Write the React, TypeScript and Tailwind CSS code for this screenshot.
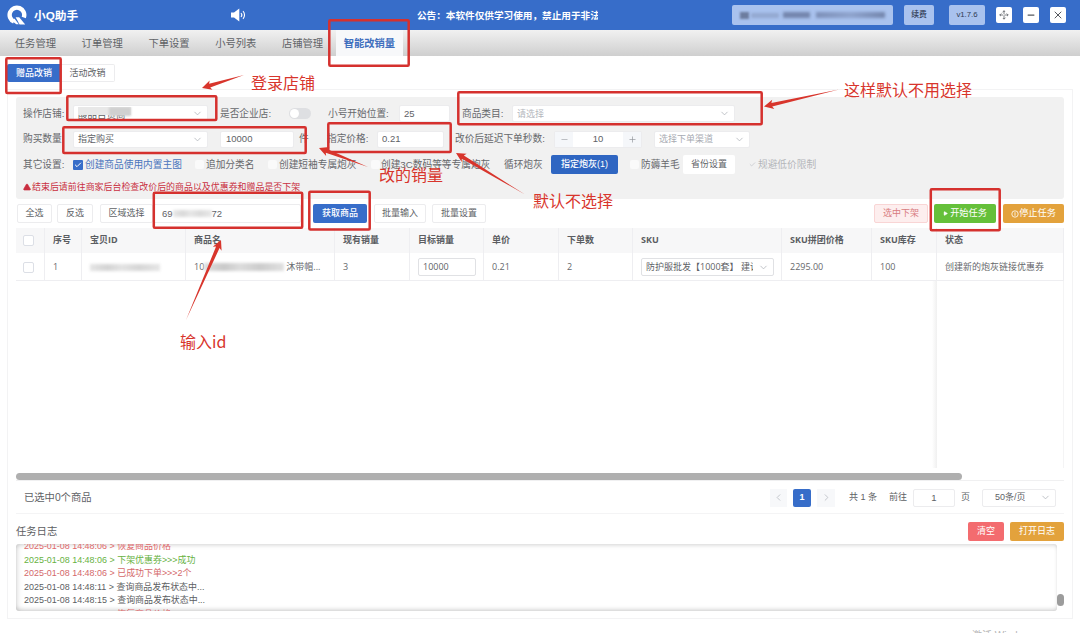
import { AlertTriangle, Check, ChevronDown, ChevronLeft, ChevronRight, Minus, Move, Play, Plus, X } from "lucide-react";
import clsx from "clsx";
import type { ReactNode } from "react";

const NAV = ["任务管理", "订单管理", "下单设置", "小号列表", "店铺管理", "智能改销量"];

const COLUMNS = [
  { title: "序号", width: "w-[37px]" },
  { title: "宝贝ID", width: "w-[104px]" },
  { title: "商品名", width: "w-[149px]" },
  { title: "现有销量", width: "w-[75px]" },
  { title: "目标销量", width: "w-[74px]" },
  { title: "单价", width: "w-[75px]" },
  { title: "下单数", width: "w-[74px]" },
  { title: "SKU", width: "w-[149px]" },
  { title: "SKU拼团价格", width: "w-[90px]" },
  { title: "SKU库存", width: "w-[65px]" },
  { title: "状态", width: "w-[127px]" },
];

const LOGS = [
  { time: "2025-01-08 14:48:06", text: "恢复商品价格", color: "text-[#e0686a]" },
  { time: "2025-01-08 14:48:06", text: "下架优惠券>>>成功", color: "text-[#67b23f]" },
  { time: "2025-01-08 14:48:06", text: "已成功下单>>>2个", color: "text-[#d4686a]" },
  { time: "2025-01-08 14:48:11", text: "查询商品发布状态中...", color: "text-[#5c5e62]" },
  { time: "2025-01-08 14:48:15", text: "查询商品发布状态中...", color: "text-[#5c5e62]" },
  { time: "2025-01-08 14:48:18", text: "恢复商品价格", color: "text-[#e0686a]" },
];

const MARKS = [
  [6.3, 58.3, 54.4, 34.6],
  [329.3, 20.3, 79.4, 45.4],
  [67.3, 96.3, 149, 23.6],
  [63.3, 127.3, 242.4, 25.6],
  [328.3, 123.3, 122.4, 28.6],
  [458.3, 92.3, 303.4, 32],
  [153.8, 192.8, 148.4, 35],
  [309.3, 191.8, 60.4, 37.6],
  [930.8, 189.3, 68.9, 41],
];

const ARROWS = [
  [244, 75, 202, 88],
  [839, 89.5, 764, 106.5],
  [368, 167, 319, 148],
  [525, 194.5, 456, 153],
  [186, 320, 221, 240],
];

function Label({ children, className }: { children: ReactNode; className?: string }) {
  return <span className={clsx("shrink-0 whitespace-nowrap text-[9.7px] text-[#66686c]", className)}>{children}</span>;
}

function Field({ children, className }: { children?: ReactNode; className?: string }) {
  return (
    <div className={clsx("flex h-[17px] shrink-0 items-center rounded-[2px] border border-[#ececee] bg-white text-[9.5px] text-[#606266]", className)}>
      {children}
    </div>
  );
}

function Select({ children, className }: { children: ReactNode; className?: string }) {
  return (
    <Field className={clsx("justify-between pr-[4px] pl-[4px]", className)}>
      <span className="overflow-hidden whitespace-nowrap">{children}</span>
      <ChevronDown size={11} strokeWidth={1.8} className="shrink-0 text-[#b4b7bd]" />
    </Field>
  );
}

function Button({ children, className }: { children: ReactNode; className?: string }) {
  return (
    <button className={clsx("flex h-[19px] shrink-0 items-center justify-center rounded-[2px] text-[9px] whitespace-nowrap", className)}>
      {children}
    </button>
  );
}

function Blur({ className }: { className: string }) {
  return <span className={clsx("block shrink-0 bg-[linear-gradient(90deg,#dedede,#c9c9c9_25%,#dcdcdc_45%,#cccccc_70%,#e0e0e0)] blur-[1.5px]", className)} />;
}

function CheckBox({ className }: { className?: string }) {
  return <span className={clsx("block size-[11px] shrink-0 rounded-[2px] border border-[#dcdfe6] bg-white", className)} />;
}

function arrowPoints([x1, y1, x2, y2]: number[]) {
  const len = Math.hypot(x2 - x1, y2 - y1);
  const ux = (x2 - x1) / len;
  const uy = (y2 - y1) / len;
  const at = (back: number, side: number) => `${x2 - ux * back - uy * side},${y2 - uy * back + ux * side}`;
  return [`${x1},${y1}`, at(8, 1.9), at(9.5, 4.8), `${x2},${y2}`, at(9.5, -4.8), at(8, -1.9)].join(" ");
}

function Header() {
  return (
    <header className="flex h-[30px] items-center bg-[#376dc9] text-white">
      <svg className="ml-[7px] shrink-0" width="20" height="20" viewBox="0 0 20 20" fill="none">
        <path d="M7 16.6A7.3 7.3 0 1 1 16.8 12.4" stroke="white" strokeWidth="4.4" />
        <path d="M8.6 12.2h3.6l6 7.2h-5.6z" fill="white" />
        <path d="M7.4 13.6l4.4 5.7H9.3L5 16z" fill="white" />
      </svg>
      <span className="ml-[7px] w-[190px] pt-[2px] text-[11.7px] font-bold">小Q助手</span>
      <svg className="ml-[6px] shrink-0" width="16" height="14" viewBox="0 0 16 14" fill="none">
        <path d="M1 4.5h3L9.3.6v12.8L4 9.5H1z" fill="white" />
        <path d="M11 5a3 3 0 0 1 0 4M13 3.2a5.5 5.5 0 0 1 0 7.6" stroke="white" strokeWidth="1.1" />
      </svg>
      <div className="ml-[171px] w-[181px] overflow-hidden pt-[2px] text-[9.65px] font-bold whitespace-nowrap">
        公告：本软件仅供学习使用，禁止用于非法
      </div>
      <div className="ml-[134px] flex h-[20px] w-[161px] items-center rounded-[2px] bg-[#a9c2ee] px-[8px]">
        <span className="block h-[7px] w-[9px] bg-[#6d7d9f] blur-[1px]" />
        <span className="ml-[2px] block h-[5px] w-[28px] bg-[#93a8d0] blur-[1.5px]" />
        <span className="ml-[4px] block h-[6px] w-[27px] bg-[#7486ad] blur-[1.5px]" />
        <span className="ml-[6px] block h-[6px] w-[69px] bg-[linear-gradient(90deg,#7d90b8,#8fa4cd_50%,#7486ad)] blur-[1.5px]" />
      </div>
      <Button className="ml-[11px] h-[20px] w-[30px] bg-[#a9c2ee] text-[7.8px]! font-medium text-[#2f3a55]">续费</Button>
      <Button className="ml-[15px] h-[20px] w-[36px] bg-[#a9c2ee] text-[7.8px]! text-[#2f3a55]">v1.7.6</Button>
      <div className="ml-[11px] flex gap-[11px] text-[#55585e]">
        <span className="flex size-[16px] items-center justify-center rounded-[2px] bg-white">
          <Move size={10} strokeWidth={1.8} strokeDasharray="7 5" />
        </span>
        <span className="flex size-[16px] items-center justify-center rounded-[2px] bg-white">
          <Minus size={10} strokeWidth={3} />
        </span>
        <span className="flex size-[16px] items-center justify-center rounded-[2px] bg-white">
          <X size={12} strokeWidth={2} />
        </span>
      </div>
    </header>
  );
}

function Filters() {
  return (
    <section className="h-[102px] rounded-[3px] bg-[#f1f1f1] pt-[4px] pl-[7px]">
      <div className="flex h-[25px] items-center">
        <Label className="w-[50px]">操作店铺:</Label>
        <Select className="w-[135px]">
          <span className="relative block h-[14px] w-[100px] leading-[15px]">
            酸品百货商
            <span className="absolute -top-[1px] -left-px block h-[9px] w-[54px] bg-[#e8e8e8]" />
            <span className="absolute top-0 left-[31px] block h-[9px] w-[22px] bg-[#d0d0d0] blur-[1px]" />
          </span>
        </Select>
        <Label className="ml-[12px] w-[69px]">是否企业店:</Label>
        <span className="flex h-[11px] w-[22px] shrink-0 items-center rounded-full bg-[#dedfe2] px-[1px]">
          <span className="size-[9px] rounded-full bg-white" />
        </span>
        <Label className="ml-[17px] w-[71px]">小号开始位置:</Label>
        <Field className="w-[51px] pl-[4px]">25</Field>
        <Label className="ml-[12px] w-[50px]">商品类目:</Label>
        <Select className="w-[223px]">
          <span className="text-[9px] text-[#b4b7bd]">请选择</span>
        </Select>
      </div>
      <div className="flex h-[26px] items-center">
        <Label className="w-[50px]">购买数量</Label>
        <Select className="w-[135px]">
          <span className="text-[9px]">指定购买</span>
        </Select>
        <Field className="ml-[12px] w-[74px] pl-[5px]">10000</Field>
        <Label className="ml-[5px] w-[28px]">件</Label>
        <Label className="w-[50px]">指定价格:</Label>
        <Field className="w-[67px] pl-[4px]">0.21</Field>
        <Label className="ml-[11px] w-[99px]">改价后延迟下单秒数:</Label>
        <Field className="w-[88px] overflow-hidden">
          <span className="flex h-full w-[18px] items-center justify-center bg-[#f5f7fa]">
            <Minus size={9} strokeWidth={1.8} className="text-[#a0a3a9]" />
          </span>
          <span className="flex-1 text-center">10</span>
          <span className="flex h-full w-[18px] items-center justify-center bg-[#f5f7fa]">
            <Plus size={9} strokeWidth={1.8} className="text-[#909399]" />
          </span>
        </Field>
        <Select className="ml-[12px] w-[96px]">
          <span className="text-[9px] text-[#a8abb2]">选择下单渠道</span>
        </Select>
      </div>
      <div className="flex h-[25px] items-center">
        <Label className="w-[50px]">其它设置:</Label>
        <span className="flex size-[10px] shrink-0 items-center justify-center rounded-[1px] bg-[#376dc9]">
          <Check size={8} strokeWidth={3} className="text-white" />
        </span>
        <Label className="ml-[2px] w-[110px] text-[#4a75bd]!">创建商品使用内置主图</Label>
        <span className="size-[9px] shrink-0 rounded-[2px] bg-[#fafafa]" />
        <Label className="ml-[2px] w-[62px]">追加分类名</Label>
        <span className="size-[9px] shrink-0 rounded-[2px] bg-[#fafafa]" />
        <Label className="ml-[2px] w-[92px]">创建短袖专属炮灰</Label>
        <span className="size-[9px] shrink-0 rounded-[2px] bg-[#fafafa]" />
        <Label className="ml-[1px] w-[123px]">创建3C数码等等专属炮灰</Label>
        <Label className="w-[47px]">循环炮灰</Label>
        <Button className="w-[67px] bg-[#2f66c2] font-medium text-white">指定炮灰(1)</Button>
        <span className="ml-[12px] size-[9px] shrink-0 rounded-[2px] bg-[#fafafa]" />
        <Label className="ml-[2px] w-[42px]">防薅羊毛</Label>
        <Button className="h-[17px] w-[52px] bg-white text-[#606266]">省份设置</Button>
        <Check size={7} strokeWidth={2} className="ml-[14px] shrink-0 text-[#b9bcc2]" />
        <Label className="ml-[2px] text-[#b4b6ba]!">规避低价限制</Label>
      </div>
      <p className="flex h-[20px] items-center text-[8.95px] whitespace-nowrap text-[#c92f40]">
        <AlertTriangle size={8} strokeWidth={2} className="mr-px fill-[#c92f40]" />
        结束后请前往商家后台检查改价后的商品以及优惠券和赠品是否下架
      </p>
    </section>
  );
}

function Toolbar() {
  const plain = "border border-[#ececee] bg-white text-[#606266]";
  return (
    <div className="mt-[5px] flex h-[19px] items-center">
      <Button className={clsx(plain, "ml-[1px] w-[35px]")}>全选</Button>
      <Button className={clsx(plain, "ml-[5px] w-[36px]")}>反选</Button>
      <Button className={clsx(plain, "ml-[7px] w-[53px]")}>区域选择</Button>
      <Field className="h-[19px] w-[148px] pl-[8px]">
        69
        <Blur className="h-[7px] w-[39px] opacity-70" />
        72
      </Field>
      <Button className="ml-[12px] w-[54px] bg-[#376dc9] font-medium text-white">获取商品</Button>
      <Button className={clsx(plain, "ml-[7px] w-[52px]")}>批量输入</Button>
      <Button className={clsx(plain, "ml-[6px] w-[54px]")}>批量设置</Button>
      <Button className="ml-auto w-[54px] border border-[#f9d5d5] bg-[#fdeeee] text-[#d87c80]">选中下架</Button>
      <Button className="ml-[6px] w-[62px] gap-[2px] bg-[#65c03a] text-[9.2px]! text-white">
        <Play size={5} className="fill-white" />
        开始任务
      </Button>
      <Button className="ml-[7px] w-[61px] bg-[#e3a23c] text-[9.2px]! text-white">
        <svg width="8" height="8" viewBox="0 0 8 8" fill="none" stroke="white" strokeWidth="0.8">
          <circle cx="4" cy="4" r="3.2" />
          <path d="M4 2.2v3.6" />
        </svg>
        停止任务
      </Button>
    </div>
  );
}

function Table() {
  const cells: ReactNode[] = [
    "1",
    <Blur className="h-[7px] w-[70px] opacity-80" />,
    <>
      10
      <Blur className="h-[8px] w-[80px]" />
      <span className="ml-[2px]">沐带帽...</span>
    </>,
    "3",
    <Field className="h-[18px] w-[58px] border-[#e0e1e4]! pl-[4px] text-[9px]!">10000</Field>,
    "0.21",
    "2",
    <Field className="h-[18px] w-[133px] justify-between border-[#e0e1e4]! px-[4px]">
      <span className="w-[107px] overflow-hidden text-[9px] whitespace-nowrap">防护服批发【1000套】 建议</span>
      <ChevronDown size={11} strokeWidth={1.8} className="shrink-0 text-[#b4b7bd]" />
    </Field>,
    "2295.00",
    "100",
    <span className="whitespace-nowrap">创建新的炮灰链接优惠券</span>,
  ];

  return (
    <div className="mt-[5px] flex h-[253px] flex-col border-b border-[#f0f0f1] font-['Open_Sans','Noto_Sans_CJK_SC',sans-serif]">
      <div className="flex h-[25px] shrink-0 bg-[#f7f7f8] text-[9px] font-bold text-[#5b5d62]">
        <div className="flex w-[29px] items-center border-r border-[#eeeef1] pl-[7px]">
          <CheckBox />
        </div>
        {COLUMNS.map(({ title, width }) => (
          <div key={title} className={clsx("flex shrink-0 items-center border-r border-[#eeeef1] pl-[8px]", width)}>
            {title}
          </div>
        ))}
      </div>
      <div className="flex h-[28px] shrink-0 border-b border-[#eeeef1] text-[9px] text-[#66686c]">
        <div className="flex w-[29px] items-center border-r border-[#eeeef1] pt-px pl-[7px]">
          <CheckBox />
        </div>
        {COLUMNS.map(({ title, width }, i) => (
          <div key={title} className={clsx("flex shrink-0 items-center border-r border-[#eeeef1] pt-px pl-[8px]", width)}>
            {cells[i]}
          </div>
        ))}
      </div>
      {/* shadow edge of the pinned status column */}
      <div className="flex flex-1 justify-end">
        <div className="w-[5px] bg-linear-to-r from-transparent to-[#f0f0f0]" />
        <div className="w-[127px] border-r border-[#f4f4f5]" />
      </div>
      <div className="mt-[5px] h-[7px] w-[946px] shrink-0 rounded-full bg-[#afafaf]" />
    </div>
  );
}

function Pagination() {
  return (
    <div className="flex h-[33px] items-center border-b border-[#f4f4f5] pt-px pr-[8px] pl-[8px] text-[9px] text-[#606266]">
      <span className="pt-px text-[10.3px]">已选中0个商品</span>
      <span className="ml-auto flex h-[18px] w-[17px] items-center justify-center bg-[#f7f8fa]">
        <ChevronLeft size={11} strokeWidth={1.8} className="text-[#b9bcc2]" />
      </span>
      <span className="ml-[6px] flex size-[18px] items-center justify-center rounded-[2px] bg-[#376dc9] font-bold text-white">1</span>
      <span className="ml-[6px] flex h-[18px] w-[18px] items-center justify-center bg-[#f7f8fa]">
        <ChevronRight size={11} strokeWidth={1.8} className="text-[#b9bcc2]" />
      </span>
      <span className="ml-[14px] w-[40px] whitespace-nowrap">共 1 条</span>
      <span className="w-[24px]">前往</span>
      <Field className="h-[18px] w-[42px] justify-center">1</Field>
      <span className="ml-[6px] w-[21px]">页</span>
      <Field className="h-[18px] w-[74px] justify-between pr-[4px] pl-[12px] text-[9px]!">
        50条/页
        <ChevronDown size={11} strokeWidth={1.8} className="text-[#b4b7bd]" />
      </Field>
    </div>
  );
}

function TaskLog() {
  return (
    <>
      <div className="mt-[8px] flex h-[19px] items-center">
        <span className="pt-[2px] text-[10.3px] text-[#5c5e62]">任务日志</span>
        <Button className="ml-auto w-[36px] bg-[#f36c6f] text-white">清空</Button>
        <Button className="ml-[6px] w-[54px] bg-[#e3a23c] text-white">打开日志</Button>
      </div>
      <div className="mt-[3px] flex h-[67px]">
        <div className="w-[1041px] overflow-hidden rounded-[3px] pl-[8px] shadow-[inset_3px_0_6px_-2px_rgba(0,0,0,0.12),inset_0_3px_5px_-2px_rgba(0,0,0,0.14),inset_0_-3px_5px_-2px_rgba(0,0,0,0.18)]">
          <div className="-mt-[4px]">
            {LOGS.map(({ time, text, color }, i) => (
              <p key={i} className={clsx("h-[13.5px] text-[8.95px] leading-[13.5px] whitespace-nowrap", color)}>
                {time} &gt; {text}
              </p>
            ))}
          </div>
        </div>
        <span className="mt-[50px] h-[12px] w-[7px] rounded-full bg-[#9c9c9c]" />
      </div>
    </>
  );
}

function Annotations() {
  const text = "absolute text-[16px] leading-none whitespace-nowrap text-[#d8352c]";
  return (
    <div className="pointer-events-none absolute inset-0 font-['Noto_Sans_CJK_SC',sans-serif]">
      <svg className="absolute inset-0" width="1080" height="633" fill="none">
        {MARKS.map(([x, y, w, h]) => (
          <rect key={`${x}-${y}`} x={x} y={y} width={w} height={h} rx="1" stroke="#d5312e" strokeWidth="2.5" />
        ))}
        {ARROWS.map((a) => (
          <polygon key={a.join()} points={arrowPoints(a)} fill="#d8352c" />
        ))}
      </svg>
      <span className={clsx(text, "top-[74px] left-[251px]")}>登录店铺</span>
      <span className={clsx(text, "top-[81px] left-[844px]")}>这样默认不用选择</span>
      <span className={clsx(text, "top-[166px] left-[379px]")}>改的销量</span>
      <span className={clsx(text, "top-[192px] left-[533px]")}>默认不选择</span>
      <span className={clsx(text, "top-[333px] left-[180px]")}>输入id</span>
    </div>
  );
}

export default function App() {
  return (
    <div className="relative h-[633px] w-[1080px] overflow-hidden bg-white font-['Liberation_Sans','Noto_Sans_CJK_SC',sans-serif] leading-[1.2]">
      <Header />
      <nav className="flex h-[26px] bg-linear-to-b from-[#f1f1f1] to-[#cfcfcf] pl-[2px]">
        {NAV.map((item, i) => (
          <span
            key={item}
            className={clsx(
              "flex w-[66.8px] items-center justify-center pt-[2px] text-[10.3px] whitespace-nowrap",
              i === NAV.length - 1 ? "bg-[#f7f8fa] font-bold text-[#3f6fbe]" : "text-[#606266]"
            )}
          >
            {item}
          </span>
        ))}
      </nav>
      <div className="mt-[8px] ml-[7px] flex h-[18px] text-[9px]">
        <span className="flex w-[54px] items-center justify-center rounded-l-[2px] bg-[#376dc9] font-medium text-white">赠品改销</span>
        <span className="flex w-[54px] items-center justify-center rounded-r-[2px] border border-l-0 border-[#ececee] text-[#606266]">活动改销</span>
      </div>
      <main className="mt-[7px] ml-[7px] h-[530px] w-[1066px] border border-[#f3f3f4] px-[8px] pt-[7px]">
        <Filters />
        <Toolbar />
        <Table />
        <Pagination />
        <TaskLog />
      </main>
      <div className="mt-[10px] ml-[972px] h-[10px] text-[10px] leading-[14px] text-[#b5b5b5]">激活 Windows</div>
      <Annotations />
    </div>
  );
}
